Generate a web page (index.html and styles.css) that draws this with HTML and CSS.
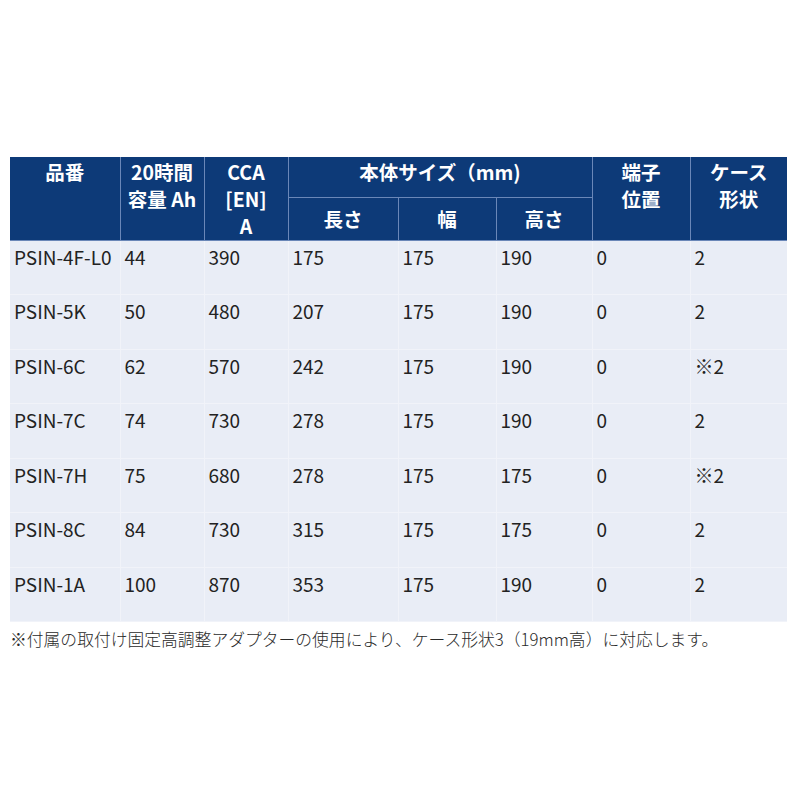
FILE: index.html
```html
<!DOCTYPE html>
<html lang="ja">
<head>
<meta charset="utf-8">
<link rel="stylesheet" href="styles.css">
</head>
<body>
<div class="page">
<table class="spec">
<colgroup>
<col class="c1"><col class="c2"><col class="c3"><col class="c4"><col class="c5"><col class="c6"><col class="c7"><col class="c8">
</colgroup>
<thead>
<tr class="h1">
<th rowspan="2">品番</th>
<th rowspan="2">20時間<br>容量 Ah</th>
<th rowspan="2">CCA<br>[EN]<br>A</th>
<th colspan="3" class="group">本体サイズ（mm)</th>
<th rowspan="2">端子<br>位置</th>
<th rowspan="2">ケース<br>形状</th>
</tr>
<tr class="h2">
<th class="sub">長さ</th>
<th class="sub">幅</th>
<th class="sub">高さ</th>
</tr>
</thead>
<tbody>
<tr><td>PSIN-4F-L0</td><td>44</td><td>390</td><td>175</td><td>175</td><td>190</td><td>0</td><td>2</td></tr>
<tr><td>PSIN-5K</td><td>50</td><td>480</td><td>207</td><td>175</td><td>190</td><td>0</td><td>2</td></tr>
<tr><td>PSIN-6C</td><td>62</td><td>570</td><td>242</td><td>175</td><td>190</td><td>0</td><td>※2</td></tr>
<tr><td>PSIN-7C</td><td>74</td><td>730</td><td>278</td><td>175</td><td>190</td><td>0</td><td>2</td></tr>
<tr><td>PSIN-7H</td><td>75</td><td>680</td><td>278</td><td>175</td><td>175</td><td>0</td><td>※2</td></tr>
<tr><td>PSIN-8C</td><td>84</td><td>730</td><td>315</td><td>175</td><td>175</td><td>0</td><td>2</td></tr>
<tr><td>PSIN-1A</td><td>100</td><td>870</td><td>353</td><td>175</td><td>190</td><td>0</td><td>2</td></tr>
</tbody>
</table>
<p class="note">※付属の取付け固定高調整アダプターの使用により、ケース形状3（19mm高）に対応します。</p>
</div>
</body>
</html>
```
FILE: styles.css
```css
html, body {
  margin: 0;
  padding: 0;
  background: #ffffff;
}
.page {
  padding: 157px 13px 0 10px;
  font-family: "Noto Sans CJK JP", "Noto Sans", sans-serif;
  color: #1a1a1a;
}
.spec {
  width: 777px;
  border-collapse: collapse;
  table-layout: fixed;
}
.c1 { width: 110px; }
.c2 { width: 84px; }
.c3 { width: 84px; }
.c4 { width: 110px; }
.c5 { width: 98px; }
.c6 { width: 96px; }
.c7 { width: 98px; }
.c8 { width: 97px; }
.spec th {
  background: #0d3a78;
  color: #ffffff;
  font-weight: 700;
  font-size: 19.5px;
  line-height: 27px;
  text-align: center;
  vertical-align: top;
  padding: 1px 0 0 0;
  border: 1px solid #6a87b8;
  border-top: none;
}
.spec thead tr.h1 th:first-child { border-left: none; }
.spec thead tr.h1 th:last-child { border-right: none; }
.spec tr.h1 { height: 40px; }
.spec tr.h2 { height: 43px; }
.spec th.group { vertical-align: top; }
.spec th.sub {
  vertical-align: middle;
  padding: 0;
  border-bottom: 1px solid #6a87b8;
}
.spec td {
  background: #e9edf6;
  font-size: 19px;
  line-height: 24px;
  height: 54.5px;
  box-sizing: border-box;
  padding: 4px 4px 0 4px;
  vertical-align: top;
  border: 1px solid #f1f3f9;
  color: #222222;
}
.spec tbody tr:first-child td { border-top: none; }
.spec td:first-child { border-left: none; }
.spec td:last-child { border-right: none; }
.note {
  margin: 5px 0 0 0;
  font-size: 16.8px;
  font-weight: 300;
  line-height: 24px;
  color: #2a2a2a;
  white-space: nowrap;
}
```
